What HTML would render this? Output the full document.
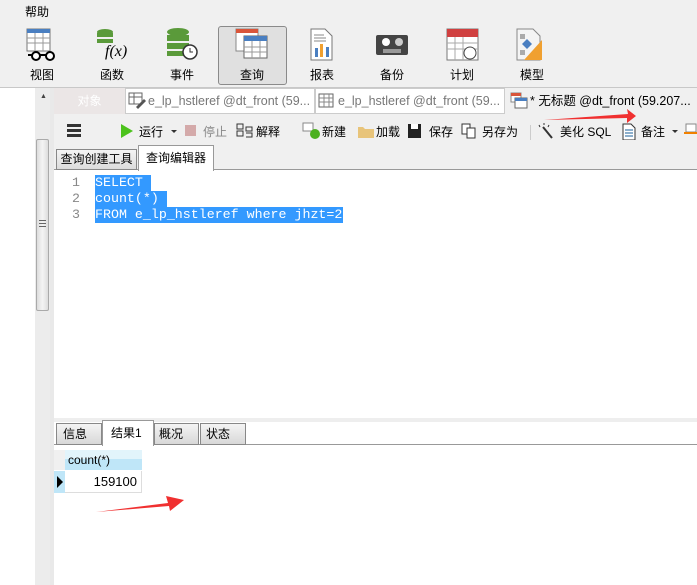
<!DOCTYPE html>
<html><head><meta charset="utf-8"><style>
*{margin:0;padding:0;box-sizing:border-box}
body{width:697px;height:585px;overflow:hidden;background:#fff;font-family:"Liberation Sans","Noto Sans CJK SC",sans-serif;font-size:12px;color:#000;position:relative}
.a{position:absolute}
.lbl{position:absolute;top:66px;font-size:12px;width:60px;text-align:center}
.mono{font-family:"Liberation Mono","Noto Sans CJK SC",monospace;font-size:13.3px}
.tb{position:absolute;top:123px;font-size:12px;white-space:nowrap}
.sel{background:#3399ff;height:16px;line-height:16px;white-space:pre}
</style></head><body>
<div class="a" style="left:0;top:0;width:697px;height:87px;background:#f0f0f0"></div>
<div class="a" style="left:25px;top:3px;font-size:12px">帮助</div>
<div class="a" style="left:0;top:87px;width:697px;height:1px;background:#c8c8c8"></div>
<div class="a" style="left:218px;top:26px;width:69px;height:59px;background:#e0e0e0;border:1px solid #8a8a8a;border-radius:3px"></div>
<svg class="a" style="left:0;top:26px" width="560" height="36">
<g><rect x="27" y="3" width="23" height="22" fill="#fff" stroke="#777"/><rect x="27" y="3" width="23" height="4" fill="#4a7fc1"/>
<path d="M27 12h23M27 17h23M35 7v18M43 7v18" stroke="#999"/><circle cx="36" cy="30" r="4" fill="#fff" stroke="#000" stroke-width="2"/><circle cx="50" cy="30" r="4" fill="#fff" stroke="#000" stroke-width="2"/><path d="M28 29h4M40 29h6" stroke="#000" stroke-width="2"/></g>
<g fill="#5a9a3a"><ellipse cx="105" cy="6" rx="8" ry="3"/><rect x="97" y="7" width="16" height="4"/><rect x="97" y="13" width="16" height="4"/></g>
<text x="105" y="30" font-family="Liberation Serif" font-style="italic" font-size="16">f(x)</text>
<g fill="#5a9a3a"><ellipse cx="178" cy="6" rx="11" ry="4"/><rect x="167" y="9" width="22" height="6"/><rect x="167" y="17" width="22" height="6"/><rect x="167" y="25" width="18" height="5"/></g>
<circle cx="190" cy="26" r="7" fill="#fff" stroke="#333" stroke-width="1.5"/><path d="M190 22v4h3" stroke="#333" fill="none"/>
<rect x="236" y="3" width="22" height="22" fill="#fff" stroke="#888"/><rect x="236" y="3" width="22" height="4" fill="#d9553a"/>
<rect x="244" y="10" width="23" height="22" fill="#fff" stroke="#666"/><rect x="244" y="10" width="23" height="5" fill="#4a7fc1"/><path d="M244 21h23M244 26h23M252 15v17M260 15v17" stroke="#999"/>
<path d="M311 3h14l7 7v24h-21z" fill="#fff" stroke="#777"/><rect x="315" y="22" width="3" height="9" fill="#4a7fc1"/><rect x="320" y="18" width="3" height="13" fill="#f0a030"/><rect x="326" y="21" width="3" height="10" fill="#4a7fc1"/><path d="M314 9h10M314 12h12M314 15h12" stroke="#888"/>
<rect x="376" y="9" width="32" height="20" rx="2" fill="#444"/><circle cx="386" cy="16" r="4" fill="#fff"/><circle cx="399" cy="16" r="4" fill="#ccc"/><rect x="383" y="23" width="18" height="4" fill="#999"/>
<rect x="447" y="3" width="31" height="31" fill="#fff" stroke="#777"/><rect x="447" y="3" width="31" height="8" fill="#d04040"/><path d="M447 17h31M447 23h31M455 11v23M463 11v23" stroke="#aaa"/><circle cx="470" cy="27" r="6" fill="#fff" stroke="#444"/>
<path d="M517 3h16l7 7v24h-23z" fill="#f4f4f4" stroke="#888"/><path d="M542 14v20h-18z" fill="#f0a030"/><rect x="520" y="8" width="5" height="5" fill="#aaa"/><path d="M527 13l5 5-5 5-5-5z" fill="#4a7fc1"/><rect x="520" y="24" width="5" height="5" fill="#aaa"/>
</svg>
<div class="lbl" style="left:12px">视图</div><div class="lbl" style="left:82px">函数</div><div class="lbl" style="left:152px">事件</div><div class="lbl" style="left:222px">查询</div><div class="lbl" style="left:292px">报表</div><div class="lbl" style="left:362px">备份</div><div class="lbl" style="left:432px">计划</div><div class="lbl" style="left:502px">模型</div>
<div class="a" style="left:35px;top:88px;width:15px;height:497px;background:#ececec"></div>
<div class="a" style="left:40px;top:93px;font-size:7px;color:#444">▲</div>
<div class="a" style="left:36px;top:139px;width:13px;height:172px;background:linear-gradient(90deg,#ddd,#f4f4f4,#ddd);border:1px solid #aaa;border-radius:2px"></div>
<div class="a" style="left:39px;top:220px;width:7px;height:7px;border-top:1px solid #666;border-bottom:1px solid #666"></div><div class="a" style="left:39px;top:223px;width:7px;height:1px;background:#666"></div>
<div class="a" style="left:50px;top:88px;width:4px;height:497px;background:#e9e9e9"></div>
<div class="a" style="left:54px;top:88px;width:643px;height:27px;background:#f0f0f0"></div>
<div class="a" style="left:54px;top:88px;width:71px;height:26px;background:#ebe6e6;color:#fff;text-align:center;line-height:26px">对象</div>
<div class="a" style="left:125px;top:88px;width:190px;height:26px;background:#fff;border:1px solid #ccc;color:#777;font-size:12.5px;line-height:24px;padding-left:22px">e_lp_hstleref @dt_front (59...</div>
<div class="a" style="left:315px;top:88px;width:190px;height:26px;background:#fff;border:1px solid #ccc;color:#777;font-size:12.5px;line-height:24px;padding-left:22px">e_lp_hstleref @dt_front (59...</div>
<div class="a" style="left:505px;top:88px;width:192px;height:26px;color:#000;font-size:12.5px;line-height:26px;padding-left:25px;white-space:nowrap">* 无标题 @dt_front (59.207...</div>
<svg class="a" style="left:128px;top:92px" width="400" height="18"><rect x="1" y="1" width="13" height="11" fill="#fff" stroke="#666"/><path d="M1 5h13M6 1v11" stroke="#666"/><path d="M8 15l8-8 2 2-8 8z" fill="#555"/>
<rect x="191" y="2" width="14" height="13" fill="#fff" stroke="#666"/><path d="M191 6h14M191 10h14M196 2v13M201 2v13" stroke="#888"/>
<rect x="383" y="1" width="10" height="9" fill="#fff" stroke="#888"/><rect x="383" y="1" width="10" height="3" fill="#d9553a"/><rect x="387" y="6" width="12" height="10" fill="#fff" stroke="#666"/><rect x="387" y="6" width="12" height="3" fill="#4a7fc1"/></svg>
<div class="a" style="left:54px;top:115px;width:643px;height:32px;background:#f0f0f0"></div>
<div class="a" style="left:67px;top:124px;width:14px;height:3px;background:#333;box-shadow:0 5px 0 #333,0 10px 0 #333"></div>
<svg class="a" style="left:118px;top:122px" width="580" height="18">
<path d="M3 2l12 7-12 7z" fill="#4cc21c"/><path d="M53 8h6l-3 3z" fill="#333"/><rect x="67" y="3" width="11" height="11" fill="#d4aaaa"/>
<path d="M119 2h6v5h-6zM119 9h6v5h-6zM128 5h6v4h-6zM128 11h6v4h-6" fill="none" stroke="#333"/>
<rect x="185" y="1" width="10" height="8" fill="#fff" stroke="#888"/><circle cx="197" cy="12" r="5" fill="#4cb020"/>
<path d="M240 5h5l2 2h9v9h-16z" fill="#e8c47a"/><rect x="290" y="2" width="13" height="14" fill="#222"/><rect x="293" y="2" width="7" height="5" fill="#fff"/>
<rect x="344" y="2" width="8" height="10" fill="#fff" stroke="#333"/><rect x="349" y="6" width="8" height="10" fill="#fff" stroke="#333"/>
<rect x="412" y="3" width="1" height="16" fill="#ccc"/>
<path d="M425 5l9 11" stroke="#333" stroke-width="2"/><path d="M421 3l1 2M426 1v2M431 3l-1 2" stroke="#333"/>
<path d="M505 2h8l4 4v12h-12z" fill="#fff" stroke="#333"/><path d="M507 8h8M507 11h8M507 14h8" stroke="#1a5f9a"/>
<path d="M554 8h6l-3 3z" fill="#333"/><rect x="568" y="2" width="10" height="8" fill="#fff" stroke="#888"/><rect x="566" y="10" width="14" height="2" fill="#f08000"/>
</svg>
<div class="tb" style="left:139px">运行</div><div class="tb" style="left:203px;color:#888">停止</div><div class="tb" style="left:256px">解释</div>
<div class="tb" style="left:322px">新建</div><div class="tb" style="left:376px">加载</div><div class="tb" style="left:429px">保存</div><div class="tb" style="left:482px">另存为</div>
<div class="tb" style="left:560px">美化 SQL</div><div class="tb" style="left:641px">备注</div>
<div class="a" style="left:54px;top:147px;width:643px;height:23px;background:#f0f0f0;border-bottom:1px solid #999"></div>
<div class="a" style="left:56px;top:149px;width:81px;height:21px;background:linear-gradient(#f4f4f4,#dcdcdc);border:1px solid #888;text-align:center;line-height:19px">查询创建工具</div>
<div class="a" style="left:138px;top:145px;width:76px;height:26px;background:#fff;border:1px solid #999;border-bottom:none;text-align:center;line-height:24px">查询编辑器</div>
<div class="a" style="left:54px;top:171px;width:643px;height:247px;background:#fff"></div>
<div class="a mono" style="left:60px;top:175px;width:20px;text-align:right;color:#888;line-height:16px">1<br>2<br>3</div>
<div class="a mono sel" style="left:95px;top:175px;width:56px;color:#fff">SELECT</div>
<div class="a mono sel" style="left:95px;top:191px;width:72px;color:#fff">count(*)</div>
<div class="a mono sel" style="left:95px;top:207px;width:248px;color:#fff">FROM e_lp_hstleref where jhzt=2</div>
<div class="a" style="left:54px;top:418px;width:643px;height:4px;background:#eee"></div>
<div class="a" style="left:54px;top:422px;width:643px;height:23px;background:#fff;border-bottom:1px solid #999"></div>
<div class="a" style="left:56px;top:423px;width:46px;height:22px;background:linear-gradient(#f4f4f4,#d8d8d8);border:1px solid #888;line-height:20px;padding-left:6px">信息</div>
<div class="a" style="left:102px;top:420px;width:52px;height:26px;background:#fff;border:1px solid #999;border-bottom:none;line-height:24px;padding-left:8px">结果1</div>
<div class="a" style="left:154px;top:423px;width:45px;height:22px;background:linear-gradient(#f4f4f4,#d8d8d8);border:1px solid #888;line-height:20px;padding-left:4px">概况</div>
<div class="a" style="left:200px;top:423px;width:46px;height:22px;background:linear-gradient(#f4f4f4,#d8d8d8);border:1px solid #888;line-height:20px;padding-left:5px">状态</div>
<div class="a" style="left:54px;top:450px;width:88px;height:20px;background:linear-gradient(#e2f4fb 45%,#bfe6f8 45%)"></div>
<div class="a" style="left:54px;top:450px;width:11px;height:20px;background:#f0f0f0"></div>
<div class="a" style="left:68px;top:453px">count(*)</div>
<div class="a" style="left:54px;top:471px;width:11px;height:22px;background:#bfe6f8"></div>
<div class="a" style="left:57px;top:476px;width:0;height:0;border-left:6px solid #000;border-top:6px solid transparent;border-bottom:6px solid transparent"></div>
<div class="a" style="left:65px;top:471px;width:77px;height:22px;border-right:1px solid #ddd;border-bottom:1px solid #ddd;text-align:right;padding-right:4px;line-height:22px;font-size:13px">159100</div>
<svg class="a" style="left:0;top:0" width="697" height="585">
<path d="M544 120L628 114l-1 -5 9 7-9 7 0-5z" fill="#f03030"/>
<path d="M96 512L168 503l-2-7 18 4-14 11-1-5z" fill="#f03030"/>
</svg>
</body></html>
